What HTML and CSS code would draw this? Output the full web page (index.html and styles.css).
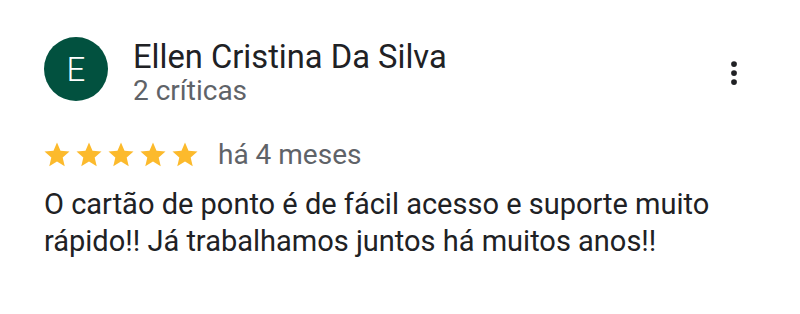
FILE: index.html
```html
<!DOCTYPE html>
<html>
<head>
    <meta charset="UTF-8">
    <meta name="viewport" content="width=device-width, initial-scale=1.0">
    <title>Avaliação</title>
    <link rel="stylesheet" href="styles.css">
</head>
<body>
    <div class="review">
        <div class="review-header">
            <div class="avatar">E</div>
            <div class="author">
                <div class="author-name">Ellen Cristina Da Silva</div>
                <div class="author-meta">2 críticas</div>
            </div>
            <button class="more-button" aria-label="Mais opções">
                <svg width="30" height="30" viewBox="0 0 24 24"><circle cx="12" cy="4.8" r="2.3"/><circle cx="12" cy="12" r="2.3"/><circle cx="12" cy="19.2" r="2.3"/></svg>
            </button>
        </div>
        <div class="rating-row">
            <div class="stars">
                <svg class="star" viewBox="0 0 24 24"><path d="M12 17.27L18.18 21l-1.64-7.03L22 9.24l-7.19-.61L12 2 9.19 8.63 2 9.24l5.46 4.73L5.82 21z"/></svg>
                <svg class="star" viewBox="0 0 24 24"><path d="M12 17.27L18.18 21l-1.64-7.03L22 9.24l-7.19-.61L12 2 9.19 8.63 2 9.24l5.46 4.73L5.82 21z"/></svg>
                <svg class="star" viewBox="0 0 24 24"><path d="M12 17.27L18.18 21l-1.64-7.03L22 9.24l-7.19-.61L12 2 9.19 8.63 2 9.24l5.46 4.73L5.82 21z"/></svg>
                <svg class="star" viewBox="0 0 24 24"><path d="M12 17.27L18.18 21l-1.64-7.03L22 9.24l-7.19-.61L12 2 9.19 8.63 2 9.24l5.46 4.73L5.82 21z"/></svg>
                <svg class="star" viewBox="0 0 24 24"><path d="M12 17.27L18.18 21l-1.64-7.03L22 9.24l-7.19-.61L12 2 9.19 8.63 2 9.24l5.46 4.73L5.82 21z"/></svg>
            </div>
            <span class="review-date">há 4 meses</span>
        </div>
        <p class="review-text">O cartão de ponto é de fácil acesso e suporte muito rápido!! Já trabalhamos juntos há muitos anos!!</p>
    </div>
</body>
</html>
```

FILE: styles.css
```css
body {
    font-family: Roboto, Arial, sans-serif;
    margin: 0;
    padding: 0;
    background-color: white;
}
.review {
    padding: 37px 40px 0 44px;
}
.review-header {
    display: flex;
    align-items: flex-start;
}
.avatar {
    width: 64px;
    height: 64px;
    border-radius: 50%;
    background-color: #02513f;
    color: white;
    font-size: 33px;
    font-weight: 300;
    display: flex;
    align-items: center;
    justify-content: center;
    flex-shrink: 0;
}
.author {
    margin-left: 25px;
    flex: 1;
}
.author-name {
    font-size: 32.7px;
    line-height: 36px;
    color: #202124;
    margin-top: 2px;
}
.author-meta {
    font-size: 28px;
    line-height: 32px;
    color: #5f6368;
}
.more-button {
    background: none;
    border: none;
    padding: 0;
    margin-top: 21px;
    margin-right: 11px;
    cursor: pointer;
}
.more-button svg {
    fill: #202124;
    display: block;
}
.rating-row {
    display: flex;
    align-items: center;
    margin-top: 31px;
}
.stars {
    display: flex;
    gap: 2px;
    margin-left: -2px;
}
.star {
    width: 30px;
    height: 30px;
    fill: #fcba2c;
}
.review-date {
    margin-left: 18px;
    font-size: 28px;
    color: #5f6368;
}
.review-text {
    margin: 15px 0 0;
    font-size: 29px;
    line-height: 37px;
    color: #202124;
    max-width: 690px;
}
```
